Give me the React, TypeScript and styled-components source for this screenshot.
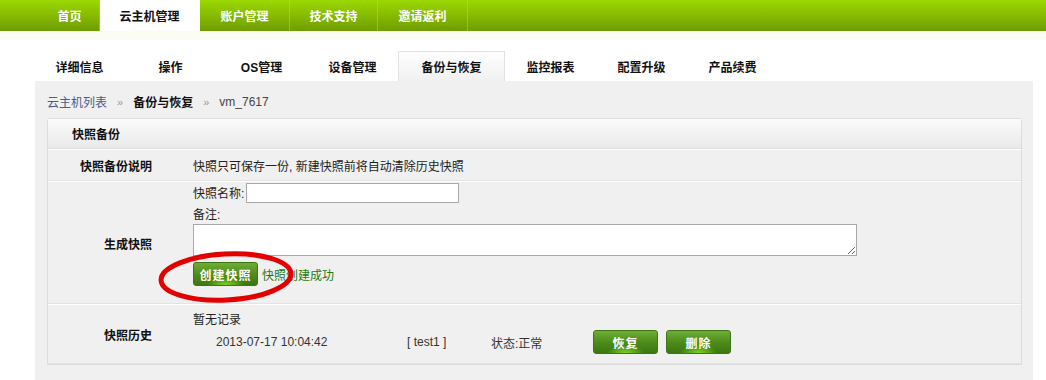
import styled, { createGlobalStyle } from 'styled-components';

const GlobalStyle = createGlobalStyle`
    body {
        margin: 0;
        background: #ffffff;
        font-family: "Liberation Sans", "Noto Sans CJK SC", sans-serif;
        font-size: 12px;
        color: #222;
    }
`;

const TopNav = styled.div`
    display: flex;
    height: 31px;
    padding-left: 40px;
    background: linear-gradient(to bottom, #9bd800 0%, #86bb00 50%, #6f9c00 100%);
    border-bottom: 9px solid #fbfdf4;
`;

const NavItem = styled.div<{ $active?: boolean; $w: number }>`
    display: flex;
    align-items: center;
    justify-content: center;
    width: ${(p) => p.$w}px;
    height: 31px;
    font-weight: bold;
    font-size: 12px;
    color: ${(p) => (p.$active ? '#111' : '#fff')};
    background: ${(p) => (p.$active ? '#fff' : 'transparent')};
    border-right: 1px solid ${(p) => (p.$active ? '#fff' : 'rgba(180, 220, 80, 0.5)')};
    box-sizing: border-box;
`;

const TabRow = styled.div`
    display: flex;
    margin-top: 11px;
    padding-left: 34px;
    height: 30px;
`;

const Tab = styled.div<{ $active?: boolean }>`
    display: flex;
    align-items: center;
    justify-content: center;
    width: ${(p) => (p.$active ? 107 : 91)}px;
    box-sizing: border-box;
    font-weight: bold;
    font-size: 12px;
    color: #111;
    border: 1px solid ${(p) => (p.$active ? '#e2e2e2' : 'transparent')};
    border-bottom: none;
    background: ${(p) =>
        p.$active ? 'linear-gradient(to bottom, #ffffff, #f0f0f0)' : 'transparent'};
`;

const ContentArea = styled.div`
    margin-left: 35px;
    width: 998px;
    height: 299px;
    background: #f0f0f0;
    padding: 0 12px 0 12px;
    box-sizing: border-box;
`;

const Breadcrumb = styled.div`
    display: flex;
    align-items: center;
    gap: 10px;
    height: 37px;
    padding-top: 4px;
    box-sizing: border-box;
    font-size: 12px;
    color: #444;
`;

const CrumbLink = styled.span`
    color: #4b5b88;
`;

const CrumbSep = styled.span`
    color: #999;
    font-size: 11px;
`;

const CrumbCurrent = styled.span`
    font-weight: bold;
    color: #111;
`;

const Panel = styled.div`
    width: 975px;
    border: 1px solid #dcdcdc;
    border-radius: 3px 3px 0 0;
    background: #f0f0f0;
    box-sizing: border-box;
`;

const PanelHeader = styled.div`
    height: 29px;
    display: flex;
    align-items: center;
    padding-left: 24px;
    font-weight: bold;
    color: #111;
    background: linear-gradient(to bottom, #fbfbfb, #e9e9e9);
    border-bottom: 1px solid #dedede;
`;

const Row = styled.div<{ $h: number }>`
    display: grid;
    grid-template-columns: 104px 1fr;
    column-gap: 41px;
    align-items: center;
    height: ${(p) => p.$h}px;
    border-top: 1px solid #fff;
    box-shadow: inset 0 -1px 0 #e4e4e4;
    position: relative;
`;

const Label = styled.div`
    text-align: right;
    font-weight: bold;
    font-size: 12px;
    color: #111;
`;

const Value = styled.div<{ $top?: boolean }>`
    display: flex;
    flex-direction: column;
    align-self: ${(p) => (p.$top ? 'start' : 'center')};
    font-size: 12px;
    color: #222;
`;

const FieldLine = styled.div`
    display: flex;
    align-items: center;
    gap: 2px;
    height: 21px;
`;

const TextInput = styled.input`
    width: 213px;
    height: 20px;
    box-sizing: border-box;
    border: 1px solid #a9a9a9;
    background: #fff;
    margin: 0;
`;

const TextArea = styled.textarea`
    width: 664px;
    height: 32px;
    box-sizing: border-box;
    border: 1px solid #a9a9a9;
    background: #fff;
    margin: 0;
    resize: both;
`;

const ActionLine = styled.div`
    display: flex;
    align-items: center;
    gap: 4px;
    margin-top: 6px;
`;

const GreenButton = styled.button`
    width: 65px;
    height: 24px;
    padding: 0;
    border: 1px solid #3f7414;
    border-radius: 3px;
    color: #fff;
    font-family: "Noto Sans CJK SC", sans-serif;
    font-weight: bold;
    font-size: 12px;
    letter-spacing: 1px;
    background:
        radial-gradient(ellipse 30% 35% at 50% 100%, rgba(140, 240, 40, 0.8), rgba(140, 240, 40, 0) 100%),
        linear-gradient(to bottom, #6fae35 0%, #4e8c1c 50%, #3d7610 100%);
`;

const SuccessText = styled.span`
    color: #1f7a10;
`;

const EmptyNote = styled.span`
    margin-top: 5px;
`;

const HistoryLine = styled.div`
    display: grid;
    grid-template-columns: 191px 84px 102px 73px 65px;
    align-items: center;
    padding-left: 23px;
    margin-top: 3px;
    color: #333;
`;

const Ellipse = styled.svg`
    position: absolute;
    left: 108px;
    top: 67px;
    pointer-events: none;
`;

const topItems = [
    { name: '首页', w: 60 },
    { name: '云主机管理', w: 100, active: true },
    { name: '账户管理', w: 90 },
    { name: '技术支持', w: 88 },
    { name: '邀请返利', w: 90 }
];

const tabs = ['详细信息', '操作', 'OS管理', '设备管理', '备份与恢复', '监控报表', '配置升级', '产品续费'];

export default function App() {
    return (
        <>
            <GlobalStyle />
            <TopNav>
                {topItems.map((item) => (
                    <NavItem key={item.name} $w={item.w} $active={item.active}>
                        {item.name}
                    </NavItem>
                ))}
            </TopNav>
            <TabRow>
                {tabs.map((t) => (
                    <Tab key={t} $active={t === '备份与恢复'}>
                        {t}
                    </Tab>
                ))}
            </TabRow>
            <ContentArea>
                <Breadcrumb>
                    <CrumbLink>云主机列表</CrumbLink>
                    <CrumbSep>»</CrumbSep>
                    <CrumbCurrent>备份与恢复</CrumbCurrent>
                    <CrumbSep>»</CrumbSep>
                    <span>vm_7617</span>
                </Breadcrumb>
                <Panel>
                    <PanelHeader>快照备份</PanelHeader>
                    <Row $h={31}>
                        <Label>快照备份说明</Label>
                        <Value>快照只可保存一份, 新建快照前将自动清除历史快照</Value>
                    </Row>
                    <Row $h={122}>
                        <Label>生成快照</Label>
                        <Value $top>
                            <FieldLine>
                                快照名称:
                                <TextInput type="text" />
                            </FieldLine>
                            <FieldLine>备注:</FieldLine>
                            <TextArea />
                            <ActionLine>
                                <GreenButton>创建快照</GreenButton>
                                <SuccessText>快照创建成功</SuccessText>
                            </ActionLine>
                        </Value>
                        <Ellipse width="140" height="56" viewBox="0 0 140 56">
                            <ellipse
                                cx="70"
                                cy="28"
                                rx="65"
                                ry="23"
                                fill="none"
                                stroke="#e30000"
                                strokeWidth="5"
                                transform="rotate(-3 70 28)"
                            />
                        </Ellipse>
                    </Row>
                    <Row $h={59}>
                        <Label>快照历史</Label>
                        <Value $top>
                            <EmptyNote>暂无记录</EmptyNote>
                            <HistoryLine>
                                <span>2013-07-17 10:04:42</span>
                                <span>[ test1 ]</span>
                                <span>状态:正常</span>
                                <GreenButton>恢复</GreenButton>
                                <GreenButton>删除</GreenButton>
                            </HistoryLine>
                        </Value>
                    </Row>
                </Panel>
            </ContentArea>
        </>
    );
}
